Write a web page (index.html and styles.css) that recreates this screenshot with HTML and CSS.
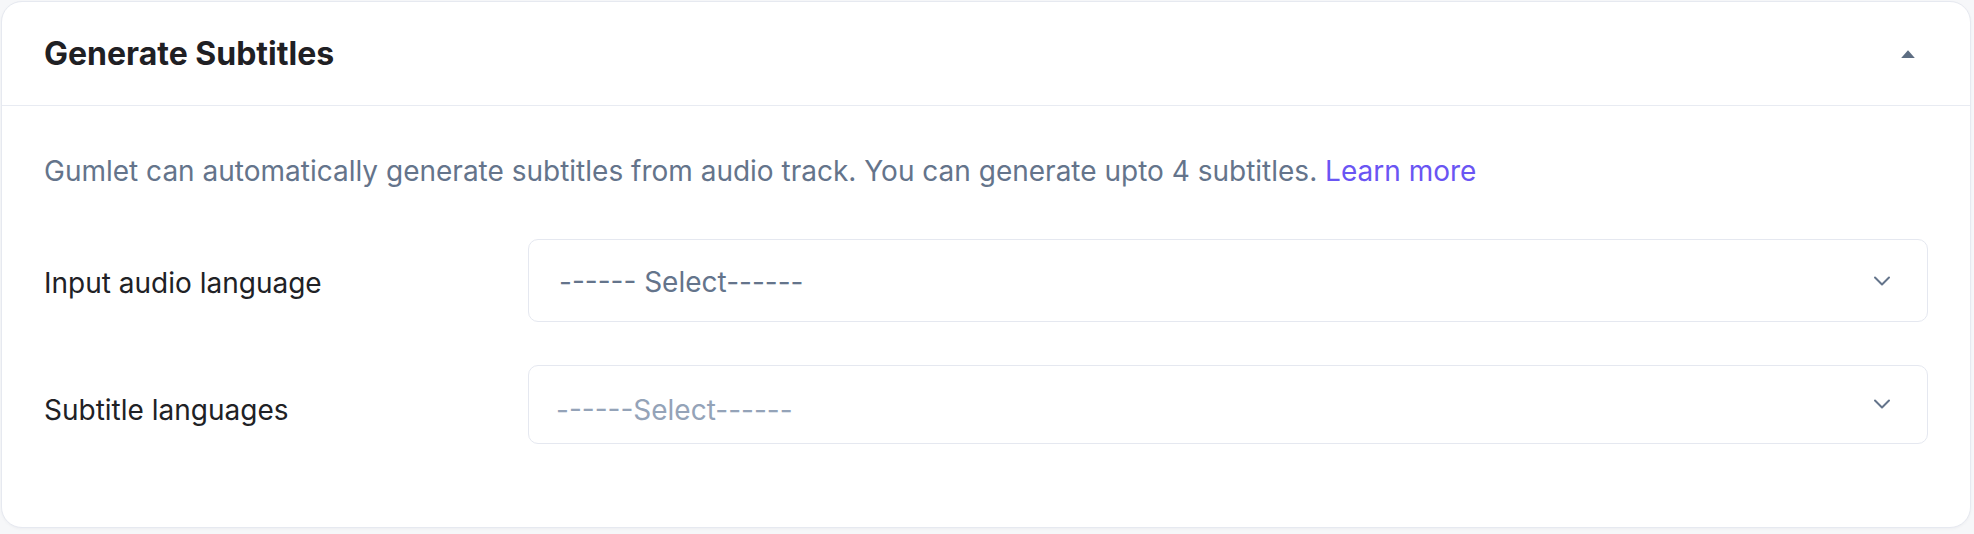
FILE: index.html
```html
<!DOCTYPE html>
<html lang="en">
<head>
<meta charset="utf-8">
<title>Generate Subtitles</title>
<link rel="stylesheet" href="styles.css">
</head>
<body>
  <section class="card">
    <header class="card-header">
      <h2 class="card-title">Generate Subtitles</h2>
      <button class="collapse-btn" aria-label="Collapse">
        <svg width="14" height="8" viewBox="0 0 14 8"><path d="M7 0.3L13.8 8H0.2Z" fill="#5d6d82"/></svg>
      </button>
    </header>
    <div class="card-body">
      <p class="desc">Gumlet can automatically generate subtitles from audio track. You can generate upto 4 subtitles. <a href="#" class="link">Learn more</a></p>
      <div class="form-row">
        <label class="label">Input audio language</label>
        <div class="select select-single">
          <span class="select-value">------ Select------</span>
          <svg class="chev" width="18" height="10" viewBox="0 0 18 10"><path d="M2 1.5l7 7 7-7" fill="none" stroke="#64748b" stroke-width="2" stroke-linecap="round" stroke-linejoin="round"/></svg>
        </div>
      </div>
      <div class="form-row row-2">
        <label class="label">Subtitle languages</label>
        <div class="select select-multi">
          <span class="select-placeholder">------Select------</span>
          <svg class="chev" width="18" height="10" viewBox="0 0 18 10"><path d="M2 1.5l7 7 7-7" fill="none" stroke="#64748b" stroke-width="2" stroke-linecap="round" stroke-linejoin="round"/></svg>
        </div>
      </div>
    </div>
  </section>
</body>
</html>
```

FILE: styles.css
```css
* { box-sizing: border-box; }

html, body {
  margin: 0;
  padding: 0;
}

body {
  background: #f6f7f9;
  font-family: "Inter", "Noto Sans", sans-serif;
  width: 1974px;
  height: 534px;
  overflow: hidden;
}

.card {
  margin: 1px 0 0 1px;
  width: 1970px;
  height: 527px;
  background: #ffffff;
  border: 1px solid #e6e9f0;
  border-radius: 21px;
  box-shadow: 0 1px 3px rgba(15, 23, 42, 0.04);
  display: flex;
  flex-direction: column;
}

.card-header {
  height: 104px;
  flex: none;
  display: flex;
  align-items: center;
  justify-content: space-between;
  padding: 0 42px 0 42px;
  border-bottom: 1px solid #e8ebf2;
}

.card-title {
  margin: 0;
  font-size: 32px;
  line-height: 1.5;
  font-weight: 700;
  color: #1f2024;
}

.collapse-btn {
  background: none;
  border: 0;
  padding: 0;
  margin-right: 13px;
  width: 14px;
  height: 8px;
  display: flex;
}

.card-body {
  padding: 44px 42px 0 42px;
}

.desc {
  margin: 0 0 47px 0;
  font-size: 28px;
  line-height: 42px;
  color: #64748b;
}

.link {
  color: #6a55f3;
  text-decoration: none;
}

.form-row {
  display: grid;
  grid-template-columns: 484px 1fr;
  align-items: center;
}

.row-2 {
  margin-top: 43px;
}

.label {
  font-size: 28px;
  line-height: 34px;
  color: #202125;
  padding-top: 5px;
}

.row-2 .label {
  padding-top: 11px;
}

.select {
  border: 1px solid #e5e8f0;
  border-radius: 10px;
  display: flex;
  align-items: center;
  justify-content: space-between;
  font-size: 28px;
  line-height: 34px;
  padding: 0 36px 0 30px;
}

.select-single {
  height: 83px;
}

.select-multi {
  height: 79px;
  padding-left: 27px;
}

.select-value {
  color: #64748b;
  padding-top: 2px;
}

.select-placeholder {
  color: #94a3b8;
  padding-top: 10px;
}

.select-multi .chev {
  margin-top: -2px;
}
```
